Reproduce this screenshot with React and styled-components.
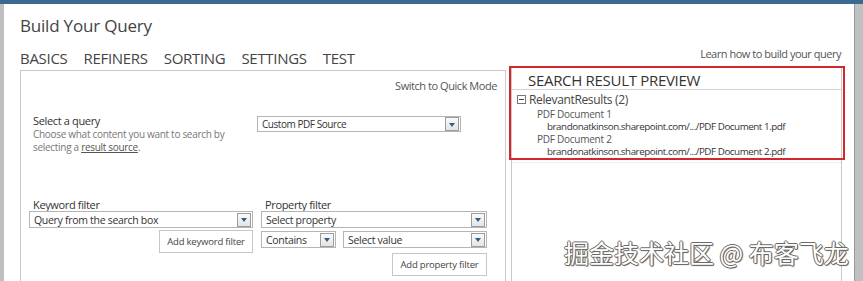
import React from 'react';
import styled, { createGlobalStyle } from 'styled-components';

const GlobalStyle = createGlobalStyle`
  html, body {
    margin: 0;
    padding: 0;
    background: #cfd0d2;
    font-family: "Open Sans", "Noto Sans", sans-serif;
    overflow: hidden;
  }
`;

const Screen = styled.div`
  position: relative;
  width: 863px;
  height: 281px;
  overflow: hidden;
  display: flex;
  flex-direction: column;
`;

const TopBar = styled.div`
  height: 4px;
  background: #3c6990;
  flex: none;
`;

const Frame = styled.div`
  flex: 1;
  display: flex;
  min-height: 0;
`;

const SideStrip = styled.div`
  width: ${(p) => p.$w}px;
  flex: none;
  background: #bfc0c2;
  border-left: ${(p) => (p.$right ? '1px solid #9a9a9a' : 'none')};
`;

const Dialog = styled.div`
  flex: 1;
  background: #fff;
  padding: 0 13px 0 16px;
  display: flex;
  flex-direction: column;
  min-width: 0;
`;

const Title = styled.h1`
  margin: 12px 0 0;
  font-size: 17px;
  font-weight: 400;
  color: #444;
  line-height: 20px;
  letter-spacing: -0.2px;
`;

const TabRow = styled.div`
  display: flex;
  align-items: flex-end;
  margin-top: 9px;
  height: 22px;
`;

const Tab = styled.span`
  font-size: 15px;
  color: #444;
  margin-right: 16px;
  line-height: 18px;
  letter-spacing: -0.3px;
`;

const LearnLink = styled.span`
  margin-left: auto;
  font-size: 11px;
  color: #555;
  line-height: 14px;
  padding-bottom: 6px;
  letter-spacing: -0.48px;
`;

const Panels = styled.div`
  flex: 1;
  display: flex;
  margin-top: -1px;
  min-height: 0;
`;

const LeftPanel = styled.div`
  flex: none;
  margin-top: 4px;
  border: 1px solid #cacaca;
  border-bottom: none;
  padding: 0 17px 0 8px;
  box-sizing: border-box;
  width: 486px;
  display: flex;
  flex-direction: column;
`;

const QuickMode = styled.div`
  align-self: flex-end;
  margin-top: 8px;
  font-size: 11px;
  color: #555;
  line-height: 14px;
  margin-right: -9px;
  letter-spacing: -0.45px;
`;

const QueryRow = styled.div`
  display: flex;
  margin-top: 21px;
`;

const QueryInfo = styled.div`
  width: 224px;
  padding-left: 4px;
`;

const FieldLabel = styled.div`
  font-size: 11px;
  color: #333;
  line-height: ${(p) => (p.$indent ? 12 : 14)}px;
  letter-spacing: -0.35px;
  padding-left: ${(p) => (p.$indent ? '4px' : '0')};
`;

const Help = styled.div`
  font-size: 10px;
  color: #777;
  line-height: 13px;
  letter-spacing: -0.3px;

  u {
    color: #555;
  }
`;

const SelectBox = styled.div`
  box-sizing: border-box;
  width: ${(p) => p.$w}px;
  height: ${(p) => p.$h || 17}px;
  border: 1px solid #b5b5b5;
  display: flex;
  align-items: center;
  padding: 0 1px 0 4px;
  font-size: ${(p) => p.$fs || 10.5}px;
  color: #333;
  background: #fff;
  letter-spacing: ${(p) => (p.$fs ? -0.45 : -0.3)}px;
  margin-top: ${(p) => p.$mt || 0}px;
`;

const SelectText = styled.span`
  flex: 1;
  white-space: nowrap;
  overflow: hidden;
`;

const ArrowBtn = styled.span`
  width: 12px;
  height: 12px;
  border: 1px solid #9c9c9c;
  background: linear-gradient(#fafafa, #e4e4e4);
  display: flex;
  align-items: center;
  justify-content: center;
  flex: none;

  &::after {
    content: '';
    border-left: 3px solid transparent;
    border-right: 3px solid transparent;
    border-top: 4px solid #2d5f8e;
    margin-top: 1px;
  }
`;

const Filters = styled.div`
  display: grid;
  grid-template-columns: 224px 226px;
  column-gap: 8px;
  margin-top: 45px;
`;

const FilterCol = styled.div`
  display: flex;
  flex-direction: column;
`;

const InlineRow = styled.div`
  display: flex;
  gap: 7px;
  margin-top: 3px;
`;

const ActionButton = styled.div`
  align-self: flex-end;
  box-sizing: border-box;
  width: ${(p) => p.$w}px;
  height: 23px;
  margin-top: ${(p) => p.$mt}px;
  border: 1px solid #c6c6c6;
  display: flex;
  align-items: center;
  justify-content: center;
  font-size: 9.5px;
  color: #444;
  background: #fff;
  letter-spacing: -0.2px;
`;

const RightPanel = styled.div`
  margin-left: 5px;
  width: 331px;
  flex: none;
  box-sizing: border-box;
  border-left: 1px solid #cacaca;
  border-right: 1px solid #cacaca;
  display: flex;
  flex-direction: column;
`;

const Highlight = styled.div`
  margin: 0 -4px 0 -3px;
  border: 2px solid #d2282c;
  height: 94px;
  box-sizing: border-box;
`;

const DottedRule = styled.div`
  margin: 2px 0 0;
  border-top: 1px dotted #e2e2e2;
`;

const PreviewHead = styled.div`
  margin: 0 2px 0 1px;
  border-bottom: 1px solid #d4d4d4;
  padding: 4px 0 0 16px;
  height: 22px;
  box-sizing: border-box;
  font-size: 15px;
  color: #333;
  line-height: 16px;
  letter-spacing: -0.3px;
`;

const Tree = styled.div`
  padding: 1px 0 0 6px;
`;

const TreeRoot = styled.div`
  display: flex;
  align-items: center;
  font-size: 12px;
  color: #444;
  line-height: 17px;
  letter-spacing: -0.35px;
`;

const Minus = styled.span`
  width: 7px;
  height: 7px;
  border: 1px solid #777;
  margin-right: 3px;
  position: relative;
  flex: none;

  &::after {
    content: '';
    position: absolute;
    left: 1px;
    right: 1px;
    top: 3px;
    height: 1px;
    background: #444;
  }
`;

const TreeItem = styled.div`
  padding-left: ${(p) => p.$pad}px;
  font-size: ${(p) => (p.$url ? 9.8 : 10)}px;
  color: ${(p) => (p.$url ? '#333' : '#555')};
  line-height: 12.5px;
  letter-spacing: ${(p) => (p.$url ? -0.45 : -0.25)}px;
  white-space: nowrap;
`;

const Watermark = styled.div`
  position: absolute;
  left: 564px;
  top: 237px;
  font-family: "Noto Sans CJK SC", sans-serif;
  font-size: 25px;
  line-height: 30px;
  color: #fff;
  white-space: nowrap;
  text-shadow:
    -1px 0 0 #6a6a6a,
    1px 0 0 #6a6a6a,
    0 -1px 0 #6a6a6a,
    0 1px 0 #6a6a6a,
    1px 1px 1px #555;
`;

const tabs = ['BASICS', 'REFINERS', 'SORTING', 'SETTINGS', 'TEST'];

const results = [
  { name: 'PDF Document 1', url: 'brandonatkinson.sharepoint.com/.../PDF Document 1.pdf' },
  { name: 'PDF Document 2', url: 'brandonatkinson.sharepoint.com/.../PDF Document 2.pdf' },
];

const Select = ({ w, h, mt, fs, children }) => (
  <SelectBox $w={w} $h={h} $mt={mt} $fs={fs}>
    <SelectText>{children}</SelectText>
    <ArrowBtn />
  </SelectBox>
);

export default function App() {
  return (
    <Screen>
      <GlobalStyle />
      <TopBar />
      <Frame>
        <SideStrip $w={4} />
        <Dialog>
          <Title>Build Your Query</Title>
          <TabRow>
            {tabs.map((t) => (
              <Tab key={t}>{t}</Tab>
            ))}
            <LearnLink>Learn how to build your query</LearnLink>
          </TabRow>
          <Panels>
            <LeftPanel>
              <QuickMode>Switch to Quick Mode</QuickMode>
              <QueryRow>
                <QueryInfo>
                  <FieldLabel>Select a query</FieldLabel>
                  <Help>
                    Choose what content you want to search by
                    <br />
                    selecting a <u>result source</u>.
                  </Help>
                </QueryInfo>
                <Select w={204} h={16} mt={2} fs={10}>Custom PDF Source</Select>
              </QueryRow>
              <Filters>
                <FilterCol>
                  <FieldLabel $indent>Keyword filter</FieldLabel>
                  <Select w={224}>Query from the search box</Select>
                  <ActionButton $w={94} $mt={2}>Add keyword filter</ActionButton>
                </FilterCol>
                <FilterCol>
                  <FieldLabel $indent>Property filter</FieldLabel>
                  <Select w={226}>Select property</Select>
                  <InlineRow>
                    <Select w={75}>Contains</Select>
                    <Select w={144}>Select value</Select>
                  </InlineRow>
                  <ActionButton $w={95} $mt={5}>Add property filter</ActionButton>
                </FilterCol>
              </Filters>
            </LeftPanel>
            <RightPanel>
              <Highlight>
                <PreviewHead>SEARCH RESULT PREVIEW</PreviewHead>
                <Tree>
                  <TreeRoot>
                    <Minus />
                    RelevantResults (2)
                  </TreeRoot>
                  {results.map((r) => (
                    <React.Fragment key={r.name}>
                      <TreeItem $pad={20}>{r.name}</TreeItem>
                      <TreeItem $pad={30} $url>{r.url}</TreeItem>
                    </React.Fragment>
                  ))}
                </Tree>
              </Highlight>
              <DottedRule />
            </RightPanel>
          </Panels>
        </Dialog>
        <SideStrip $w={8} $right />
      </Frame>
      <Watermark>掘金技术社区 @ 布客飞龙</Watermark>
    </Screen>
  );
}
